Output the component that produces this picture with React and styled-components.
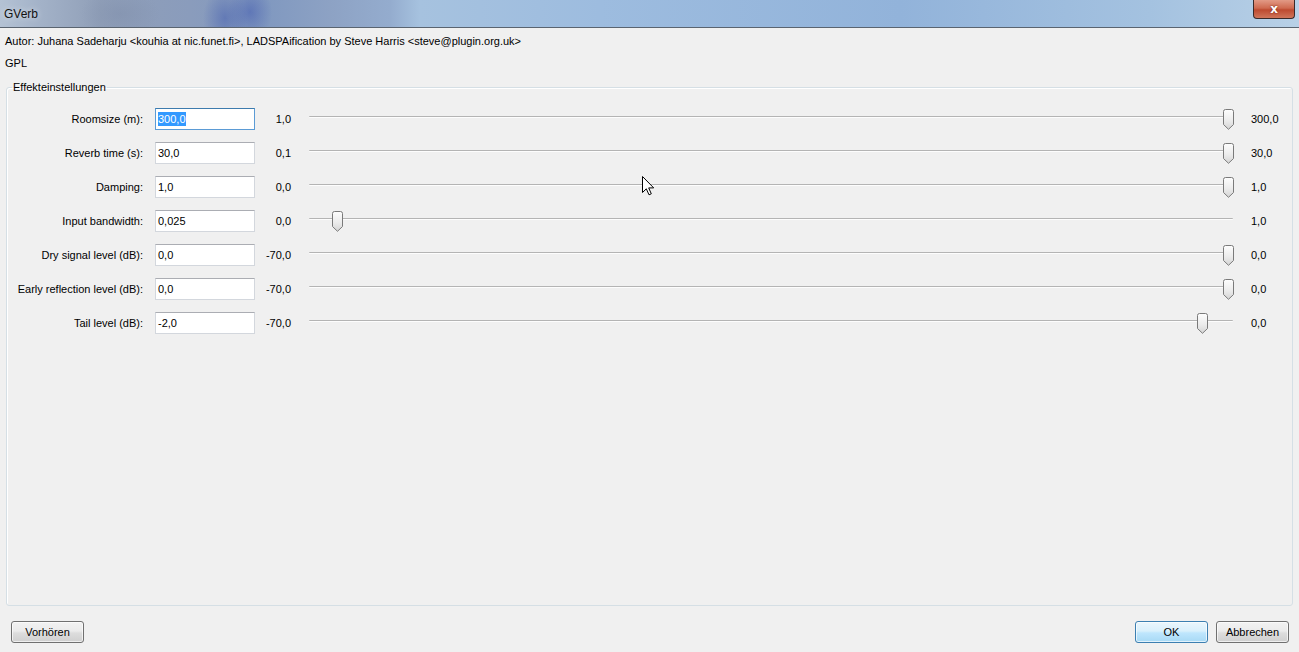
import React from "react";
import styled, { createGlobalStyle } from "styled-components";

const Global = createGlobalStyle`
  html, body { margin: 0; padding: 0; background: #f0f0f0; }
  body { font-family: "Liberation Sans", Arial, sans-serif; font-size: 11px; color: #000; }
  * { box-sizing: border-box; }
`;

const Window = styled.div`
  position: relative;
  width: 1299px;
  height: 652px;
  display: flex;
  flex-direction: column;
  background: #f0f0f0;
  overflow: hidden;
`;

const TitleBar = styled.div`
  position: relative;
  height: 28px;
  flex: none;
  display: flex;
  align-items: center;
  padding-left: 4px;
  font-size: 12px;
  color: #111;
  border-bottom: 1px solid #5a6470;
  background:
    radial-gradient(ellipse 22px 30px at 225px 18px, rgba(70,95,175,0.55), transparent),
    radial-gradient(ellipse 22px 28px at 250px 12px, rgba(60,85,175,0.5), transparent),
    radial-gradient(ellipse 40px 24px at 120px 14px, rgba(120,135,165,0.35), transparent),
    linear-gradient(90deg, #b4c2d4 0px, #a3b2c8 40px, #909fb8 100px, #8a9cbc 190px, #8199c0 270px, #8da2c4 330px, #94acce 390px, #a6c2df 420px, #9dbcdf 600px, #92b3da 900px, #a4c2e0 1150px, #b8d0e6 1299px);
`;

const Title = styled.span`
  text-shadow: 0 0 6px rgba(255,255,255,0.7);
`;

const CloseButton = styled.div`
  position: absolute;
  right: 4px;
  top: 0;
  width: 42px;
  height: 19px;
  border: 1px solid #3a2a2a;
  border-top: none;
  border-radius: 0 0 4px 4px;
  background: linear-gradient(180deg, #e29a86 0%, #cf6a50 45%, #bd4a30 55%, #d0755a 100%);
  display: flex;
  align-items: center;
  justify-content: center;
  color: #fff;
  font-family: "DejaVu Sans", sans-serif;
  font-weight: bold;
  font-size: 12px;
  text-shadow: 0 0 2px #6a1a10;
`;

const Body = styled.div`
  flex: 1;
  display: flex;
  flex-direction: column;
  padding: 0 6px;
  min-height: 0;
`;

const InfoLine = styled.div`
  height: 22px;
  display: flex;
  align-items: center;
  margin-left: -1px;
  margin-top: ${p => p.$top || 0}px;
`;

const Group = styled.fieldset`
  margin: 7px 0 0 0;
  padding: 15px 0 0 0;
  border: 1px solid #d5dfe5;
  border-radius: 3px;
  height: 525px;
  min-width: 0;
  box-shadow: inset 1px 1px 0 #fff;
`;

const Legend = styled.legend`
  padding: 0 1px;
  margin-left: 5px;
`;

const Rows = styled.div`
  display: grid;
  grid-template-columns: 148px 100px 36px 1fr 41px;
  row-gap: 12px;
  align-items: center;
`;

const Label = styled.div`
  text-align: right;
  padding-right: 12px;
  white-space: nowrap;
`;

const Input = styled.div`
  width: 100px;
  height: 22px;
  border: 1px solid ${p => (p.$focus ? "#5b9bd5" : "#d3d7dd")};
  border-top-color: ${p => (p.$focus ? "#3d7bad" : "#abadb3")};
  background: #fff;
  display: flex;
  align-items: center;
  padding-left: 2px;
`;

const Selected = styled.span`
  background: #3399ff;
  color: #fff;
  padding: 1px 0;
`;

const MinVal = styled.div`
  text-align: right;
  white-space: nowrap;
`;

const SliderWrap = styled.div`
  position: relative;
  height: 22px;
  margin: 0 18px;
`;

const Track = styled.div`
  position: absolute;
  left: 0;
  right: 0;
  top: 8px;
  height: 2px;
  border-top: 1px solid #b4b4b4;
  border-bottom: 1px solid #fdfdfd;
  border-radius: 1px;
`;

const Thumb = styled.svg`
  position: absolute;
  top: 1px;
  width: 11px;
  height: 21px;
  margin-left: -5px;
`;

const MaxVal = styled.div`
  white-space: nowrap;
`;

const Footer = styled.div`
  height: 45px;
  flex: none;
  display: flex;
  align-items: center;
  padding: 0 4px 0 5px;
`;

const Spacer = styled.div`
  flex: 1;
`;

const Button = styled.button`
  width: 73px;
  height: 22px;
  margin-left: ${p => p.$ml || 0}px;
  margin-top: 6px;
  font-family: inherit;
  font-size: 11px;
  color: #000;
  border-radius: 3px;
  border: 1px solid ${p => (p.$default ? "#3c7fb1" : "#707070")};
  background: ${p =>
    p.$default
      ? "linear-gradient(180deg, #eaf6fd 0%, #d9f0fc 45%, #bee6fd 55%, #a7d9f5 100%)"
      : "linear-gradient(180deg, #f2f2f2 0%, #ebebeb 45%, #dddddd 55%, #cfcfcf 100%)"};
  box-shadow: inset 0 0 0 1px rgba(255,255,255,0.65);
  padding: 0;
`;

const Cursor = styled.svg`
  position: absolute;
  left: 642px;
  top: 176px;
  width: 13px;
  height: 20px;
  pointer-events: none;
`;

const rows = [
  { label: "Roomsize (m):", value: "300,0", min: 1, max: 300, v: 300, minT: "1,0", maxT: "300,0", focus: true },
  { label: "Reverb time (s):", value: "30,0", min: 0.1, max: 30, v: 30, minT: "0,1", maxT: "30,0" },
  { label: "Damping:", value: "1,0", min: 0, max: 1, v: 1, minT: "0,0", maxT: "1,0" },
  { label: "Input bandwidth:", value: "0,025", min: 0, max: 1, v: 0.025, minT: "0,0", maxT: "1,0" },
  { label: "Dry signal level (dB):", value: "0,0", min: -70, max: 0, v: 0, minT: "-70,0", maxT: "0,0" },
  { label: "Early reflection level (dB):", value: "0,0", min: -70, max: 0, v: 0, minT: "-70,0", maxT: "0,0" },
  { label: "Tail level (dB):", value: "-2,0", min: -70, max: 0, v: -2, minT: "-70,0", maxT: "0,0" },
];

function SliderThumb({ frac }) {
  return (
    <Thumb viewBox="0 0 11 21" style={{ left: `calc(5px + (100% - 10px) * ${frac})` }}>
      <defs>
        <linearGradient id="tg" x1="0" y1="0" x2="0" y2="1">
          <stop offset="0" stopColor="#fdfdfd" />
          <stop offset="0.55" stopColor="#ececec" />
          <stop offset="1" stopColor="#d4d4d4" />
        </linearGradient>
      </defs>
      <path
        d="M0.5 2.5 Q0.5 0.5 2.5 0.5 H8.5 Q10.5 0.5 10.5 2.5 V15.5 L5.5 20.3 L0.5 15.5 Z"
        fill="url(#tg)"
        stroke="#7a7a7a"
        strokeWidth="1"
      />
    </Thumb>
  );
}

export default function App() {
  return (
    <>
      <Global />
      <Window>
        <TitleBar>
          <Title>GVerb</Title>
          <CloseButton>x</CloseButton>
        </TitleBar>
        <Body>
          <InfoLine $top={2}>
            Autor: Juhana Sadeharju &lt;kouhia at nic.funet.fi&gt;, LADSPAification by Steve Harris &lt;steve@plugin.org.uk&gt;
          </InfoLine>
          <InfoLine>GPL</InfoLine>
          <Group>
            <Legend>Effekteinstellungen</Legend>
            <Rows>
              {rows.map(r => (
                <React.Fragment key={r.label}>
                  <Label>{r.label}</Label>
                  <Input $focus={r.focus}>
                    {r.focus ? <Selected>{r.value}</Selected> : r.value}
                  </Input>
                  <MinVal>{r.minT}</MinVal>
                  <SliderWrap>
                    <Track />
                    {r.v > r.min && <SliderThumb frac={(r.v - r.min) / (r.max - r.min)} />}
                  </SliderWrap>
                  <MaxVal>{r.maxT}</MaxVal>
                </React.Fragment>
              ))}
            </Rows>
          </Group>
          <Footer>
            <Button>Vorhören</Button>
            <Spacer />
            <Button $default>OK</Button>
            <Button $ml={8}>Abbrechen</Button>
          </Footer>
        </Body>
        <Cursor viewBox="0 0 13 20">
          <path d="M0.5 0.5 V16.5 L4.3 12.8 L7 18.8 L9.3 17.8 L6.7 11.9 L11.7 11.9 Z" fill="#fff" stroke="#000" strokeWidth="1" strokeLinejoin="round" />
        </Cursor>
      </Window>
    </>
  );
}
